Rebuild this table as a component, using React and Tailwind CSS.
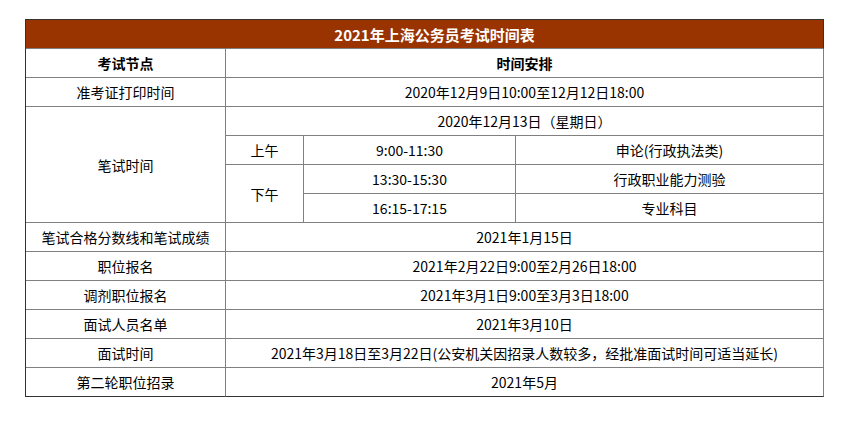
import React from "react";

const F = { fontFamily: '"Noto Sans CJK SC", "Noto Sans", sans-serif' };

function Cell({ children, className = "" }) {
  return (
    <div
      className={
        "flex items-center justify-center border-r border-b border-[#808080] text-[14px] leading-none text-black whitespace-nowrap " +
        className
      }
    >
      {children}
    </div>
  );
}

export default function App() {
  return (
    <div className="w-[845px] h-[421px] bg-white pt-[19px] pl-[25px]" style={F}>
      <div className="grid w-[799px] grid-cols-[200px_78px_212px_308px] grid-rows-[repeat(13,29px)] border-l border-t border-[#333333]">
        <div className="col-span-4 flex items-center justify-center bg-[#993300] border-r border-r-[#333333] border-b border-b-[#808080] pl-[20px] text-[15px] leading-none font-bold text-white">
          2021年上海公务员考试时间表
        </div>

        <Cell className="font-bold">考试节点</Cell>
        <Cell className="col-span-3 font-bold">时间安排</Cell>

        <Cell>准考证打印时间</Cell>
        <Cell className="col-span-3">2020年12月9日10:00至12月12日18:00</Cell>

        <Cell className="row-span-4">笔试时间</Cell>
        <Cell className="col-span-3">2020年12月13日（星期日）</Cell>
        <Cell>上午</Cell>
        <Cell>9:00-11:30</Cell>
        <Cell>申论(行政执法类)</Cell>
        <Cell className="row-span-2">下午</Cell>
        <Cell>13:30-15:30</Cell>
        <Cell>行政职业能力测验</Cell>
        <Cell>16:15-17:15</Cell>
        <Cell>专业科目</Cell>

        <Cell>笔试合格分数线和笔试成绩</Cell>
        <Cell className="col-span-3">2021年1月15日</Cell>

        <Cell>职位报名</Cell>
        <Cell className="col-span-3">2021年2月22日9:00至2月26日18:00</Cell>

        <Cell>调剂职位报名</Cell>
        <Cell className="col-span-3">2021年3月1日9:00至3月3日18:00</Cell>

        <Cell>面试人员名单</Cell>
        <Cell className="col-span-3">2021年3月10日</Cell>

        <Cell>面试时间</Cell>
        <Cell className="col-span-3">2021年3月18日至3月22日(公安机关因招录人数较多，经批准面试时间可适当延长)</Cell>

        <Cell className="border-b-[#333333]">第二轮职位招录</Cell>
        <Cell className="col-span-3 border-b-[#333333]">2021年5月</Cell>
      </div>
    </div>
  );
}
